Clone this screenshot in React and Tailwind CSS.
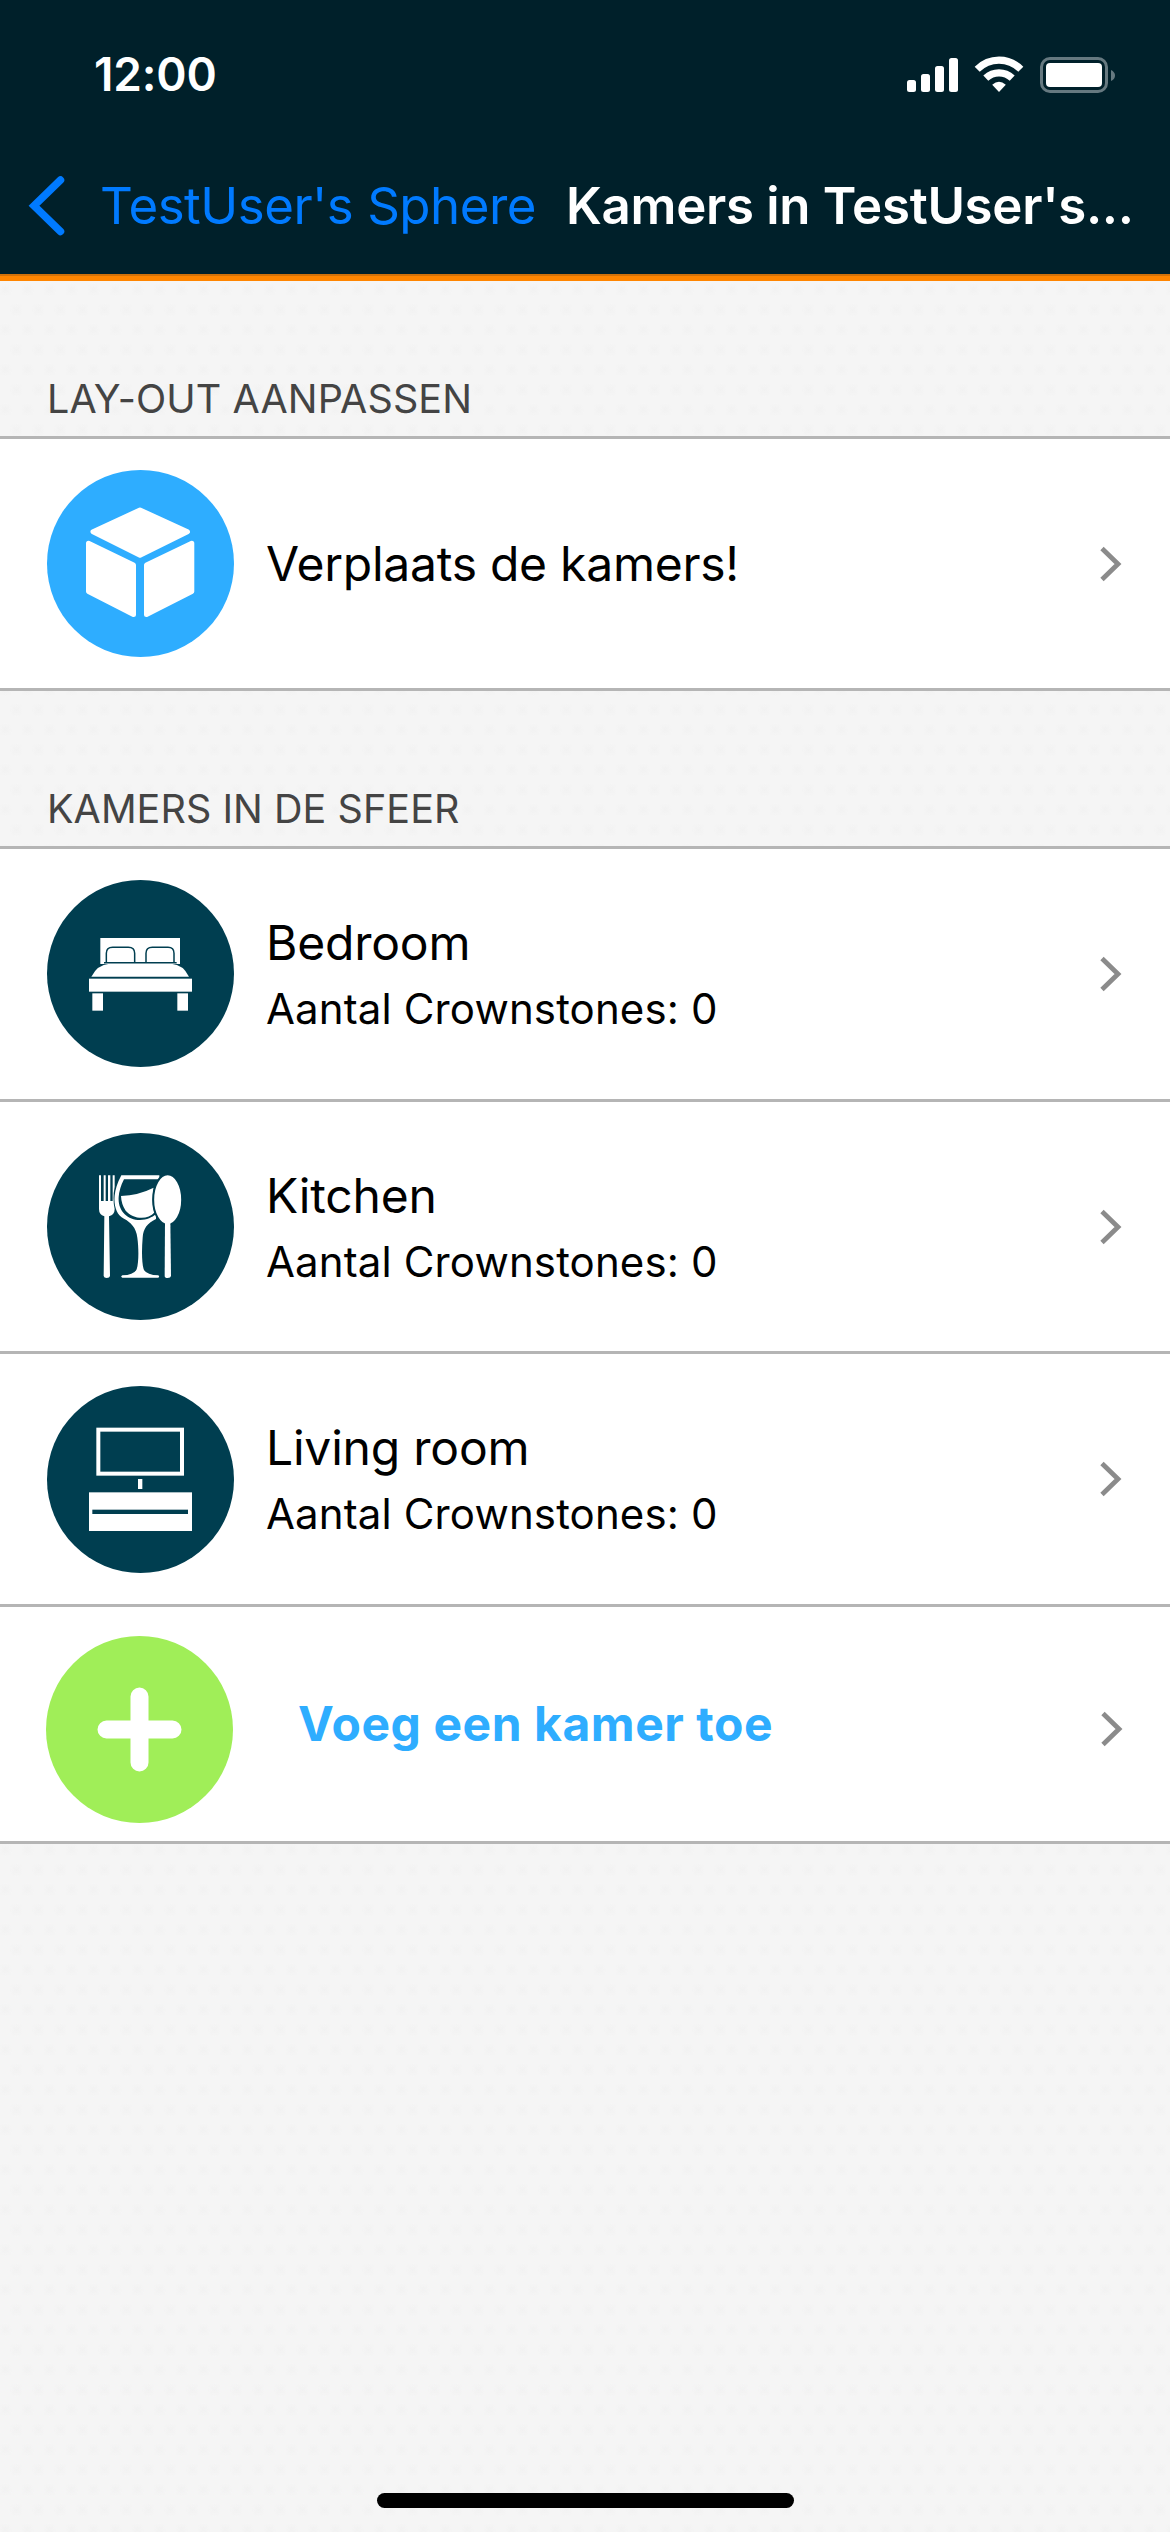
function StatusIcons() {
  return (
    <svg className="ml-auto mr-[55px]" width="208" height="40" viewBox="907 54 208 40">
      <g fill="#fff">
        <rect x="907" y="79" width="9" height="12" rx="2.5" />
        <rect x="921" y="73" width="9" height="18" rx="2.5" />
        <rect x="935" y="65" width="9" height="26" rx="2.5" />
        <rect x="949" y="57" width="9" height="34" rx="2.5" />
        <path d="M999 91 L992.2 83.7 Q999 78 1005.800 83.7 Z" />
        <rect x="1046" y="62" width="56" height="24" rx="4" />
      </g>
      <g fill="none" stroke="#fff" strokeWidth="7.200">
        <path d="M977.200 68.300 Q986.500 59.200 999 59.200 T1020.800 68.300" />
        <path d="M985.800 77.200 Q991.500 71.800 999 71.800 T1012.200 77.200" />
      </g>
      <rect x="1041.500" y="57.500" width="65" height="33" rx="8.500" fill="none" stroke="#667980" strokeWidth="3" />
      <path d="M1111 69 Q1115 71 1115 74.500 T1111 80 Z" fill="#667980" />
    </svg>
  );
}

function Cube() {
  return (
    <svg className="block size-[187px]" viewBox="0 0 187 187">
      <g fill="#fff" stroke="#fff" strokeWidth="5" strokeLinejoin="round">
        <path d="M93 40 L46 61.800 L93 85.300 L140.500 61.800 Z" />
        <path d="M41.500 73.300 L86.500 95 V144.500 L41.500 121.500 Z" />
        <path d="M144.800 73.300 L99.500 95 V144.500 L144.800 121.500 Z" />
      </g>
    </svg>
  );
}

function Bed() {
  return (
    <svg className="block size-[187px]" viewBox="51 60 561 561">
      <g fill="#fff">
        <path d="M211 234 H450 V312 H211 Z" />
        <path d="M184 350 Q202 314 238 311 H424 Q460 314 477 350 Z" />
        <rect x="177" y="356" width="309" height="39" />
        <rect x="187" y="400" width="32" height="52" />
        <rect x="442" y="400" width="32" height="52" />
      </g>
      <g fill="none" stroke="#003e50" strokeWidth="4.500">
        <path d="M229 308 V280 Q229 262 248 262 H295 Q314 262 314 280 V308" />
        <path d="M348 308 V280 Q348 262 367 262 H414 Q432 262 432 280 V308" />
        <path d="M222 308.500 H440" />
      </g>
    </svg>
  );
}

function Dining() {
  return (
    <svg className="block size-[187px]" viewBox="51 54 561 561">
      <g fill="#fff">
        <path d="M207 181 H213 V258 H221 V181 H227 V258 H234 V181 H241 V258 H248 V181 H254 V215 Q247 250 254 282 Q254 299 237 304 L240 483 Q239 489 230 489 Q222 489 221 483 L223 304 Q207 299 207 282 Z" />
        <path d="M273 243 Q325 241 371 218 C366 250 367 272 374 292 C352 317 308 312 287 287 Q274 268 273 243 Z" />
        <path d="M274 181 H388 V193 H282 Q268 220 266 246 C263 287 292 315 330 315 C351 315 366 307 378 298 V312 C351 326 340 340 338 368 C335 402 335 442 341 463 Q349 480 385 481 Q390 485 385 488 H277 Q270 485 277 481 Q312 480 320 463 C327 442 326 396 322 368 C319 337 301 321 282 311 C259 300 251 271 254 242 Q257 213 274 181 Z" />
        <path d="M405 320 H421 L423 483 Q422 489 413 489 Q404 489 404 483 Z" />
      </g>
      <ellipse cx="413" cy="254" rx="43.500" ry="76" fill="#fff" stroke="#003e50" strokeWidth="6" />
      <rect x="405" y="322" width="16" height="12" fill="#fff" />
    </svg>
  );
}

function Television() {
  return (
    <svg className="block size-[187px]" viewBox="51 48 561 561">
      <rect x="205" y="179" width="251" height="132" fill="none" stroke="#fff" strokeWidth="12" />
      <rect x="324" y="327" width="13" height="30" fill="#fff" />
      <rect x="177" y="367" width="309" height="116" fill="#fff" />
      <rect x="187" y="419" width="287" height="13" fill="#003e50" />
    </svg>
  );
}

function Plus() {
  return (
    <svg className="block size-[187px]" viewBox="0 0 187 187">
      <path d="M93.500 60.500 V126.500 M60.500 93.500 H126.500" stroke="#fff" strokeWidth="18" strokeLinecap="round" />
    </svg>
  );
}

function Chevron({ className = "mr-[48px]" }) {
  return (
    <svg className={`ml-auto shrink-0 ${className}`} width="22" height="36" viewBox="0 0 22 36">
      <path d="M2 2.500 L18 18 L2 33.500" fill="none" stroke="#8b8b8b" strokeWidth="4.800" />
    </svg>
  );
}

function SectionTitle({ children, className }) {
  return (
    <h2 className={`pl-[47px] text-[39.500px] leading-[74px] text-[#444] whitespace-nowrap ${className}`}>{children}</h2>
  );
}

function RoomRow({ name, icon, className, iconClassName = "" }) {
  return (
    <li className={`flex items-center border-b-[3px] border-[#b5b5b5] bg-white pl-[47px] ${className}`}>
      <div className={`shrink-0 rounded-full bg-[#003e50] ${iconClassName}`}>{icon}</div>
      <div className="ml-8 pt-1 leading-[66px] whitespace-nowrap">
        <div className="text-[48px]"><span className="tracking-[-0.2px]">{name}</span></div>
        <div className="text-[42px]"><span className="tracking-[0.130px]">Aantal Crownstones: 0</span></div>
      </div>
      <Chevron />
    </li>
  );
}

export default function App() {
  return (
    <div className="flex h-[2532px] w-[1170px] flex-col overflow-hidden bg-[#f5f5f5] bg-[radial-gradient(circle_at_25%_25%,#f2f2f2_0,transparent_7px),radial-gradient(circle_at_75%_75%,#f2f2f2_0,transparent_7px)] bg-[length:22px_40px] font-['Inter',sans-serif] text-black">
      <header className="flex h-[281px] shrink-0 flex-col bg-[#00202a] text-white">
        <div className="flex h-[149px] items-center pl-[94px]">
          <span className="text-[46px] font-semibold"><span className="tracking-[-0.150px]">12:00</span></span>
          <StatusIcons />
        </div>
        <div className="flex h-[114px] items-center whitespace-nowrap text-[51px]">
          <svg className="ml-[28px] shrink-0" width="40" height="64" viewBox="28 174 40 64">
            <path d="M60.500 180 L34 205.800 L60.500 231.500" fill="none" stroke="#007aff" strokeWidth="7.500" strokeLinecap="round" />
          </svg>
          <span className="ml-[32px] w-[466px] text-[#007aff]"><span className="tracking-[-0.5px]">TestUser's Sphere</span></span>
          <h1 className="font-semibold"><span className="tracking-[-0.3px]">Kamers in TestUser's...</span></h1>
        </div>
        <div className="mt-auto h-[7px] border-t-2 border-[#d27109] bg-[#ff8500]" />
      </header>
      <main>
        <SectionTitle className="mt-[81px]"><span className="tracking-[0.1px]">LAY-OUT AANPASSEN</span></SectionTitle>
        <div className="flex h-[255px] items-center border-y-[3px] border-[#b5b5b5] bg-white pl-[47px]">
          <div className="shrink-0 rounded-full bg-[#2eadff]"><Cube /></div>
          <div className="ml-8 text-[48px] whitespace-nowrap"><span className="tracking-[-0.250px]">Verplaats de kamers!</span></div>
          <Chevron />
        </div>
        <SectionTitle className="mt-[81px]"><span className="tracking-[0.050px]">KAMERS IN DE SFEER</span></SectionTitle>
        <ul className="border-t-[3px] border-[#b5b5b5]">
          <RoomRow name="Bedroom" icon={<Bed />} className="h-[253px]" iconClassName="-mt-px" />
          <RoomRow name="Kitchen" icon={<Dining />} className="h-[252px]" />
          <RoomRow name="Living room" icon={<Television />} className="h-[253px]" iconClassName="mt-px" />
          <li className="flex h-[237px] items-center border-b-[3px] border-[#b5b5b5] bg-white pl-[46px]">
            <div className="mt-[11px] shrink-0 rounded-full bg-[#a0ee58]"><Plus /></div>
            <div className="ml-[65px] text-[48px] font-bold whitespace-nowrap text-[#2eadff]"><span className="tracking-[0.550px]">Voeg een kamer toe</span></div>
            <Chevron className="mr-[47px] mt-[10px]" />
          </li>
        </ul>
      </main>
      <footer className="mx-auto mt-auto mb-[24px] h-[15px] w-[417px] shrink-0 rounded-full bg-black" />
    </div>
  );
}
